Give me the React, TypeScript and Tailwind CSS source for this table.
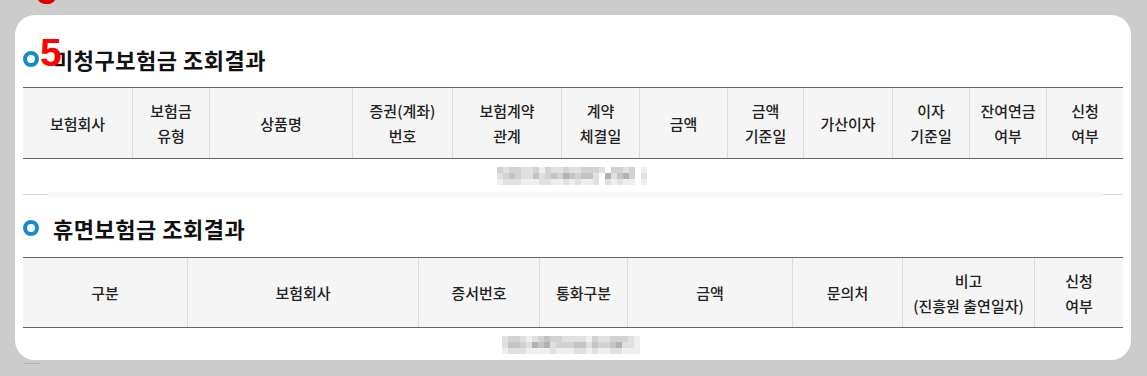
import React from 'react'

type Col = { label: string[]; w: string }

const unclaimedCols: Col[] = [
  { label: ['보험회사'], w: 'w-[109px]' },
  { label: ['보험금', '유형'], w: 'w-[77px]' },
  { label: ['상품명'], w: 'w-[143px]' },
  { label: ['증권(계좌)', '번호'], w: 'w-[100px]' },
  { label: ['보험계약', '관계'], w: 'w-[109px]' },
  { label: ['계약', '체결일'], w: 'w-[78px]' },
  { label: ['금액'], w: 'w-[88px]' },
  { label: ['금액', '기준일'], w: 'w-[76px]' },
  { label: ['가산이자'], w: 'w-[89px]' },
  { label: ['이자', '기준일'], w: 'w-[77px]' },
  { label: ['잔여연금', '여부'], w: 'w-[77px]' },
  { label: ['신청', '여부'], w: 'w-[77px]' },
]

const dormantCols: Col[] = [
  { label: ['구분'], w: 'w-[164px]' },
  { label: ['보험회사'], w: 'w-[231px]' },
  { label: ['증서번호'], w: 'w-[121px]' },
  { label: ['통화구분'], w: 'w-[88px]' },
  { label: ['금액'], w: 'w-[165px]' },
  { label: ['문의처'], w: 'w-[110px]' },
  { label: ['비고', '(진흥원 출연일자)'], w: 'w-[132px]' },
  { label: ['신청', '여부'], w: 'w-[89px]' },
]

// pixelated (masked) result text, one digit per 6px block
const shades = ['transparent', '#efefef', '#e0e0e0', '#d2d2d2', '#c4c4c4', '#b2b2b2']
const blur1 = ['3233223132232233320332301', '2343224234354344205245302', '1222111221121211202121101']
const blur2 = ['23321234332222132233321', '24432545233344243345221', '12221111211122121122111']

function Pixelated({ rows, w, h }: { rows: string[]; w: number; h: number }) {
  return (
    <svg width={w} height={h} className="block">
      {rows.map((row, r) =>
        row.split('').map((c, i) =>
          c === '0' ? null : <rect key={`${r}-${i}`} x={i * 6} y={r * 6} width={6} height={6} fill={shades[+c]} />
        )
      )}
    </svg>
  )
}

function SectionTitle({ children }: { children: React.ReactNode }) {
  return (
    <div className="flex items-center h-[30px] gap-[14px]">
      <span className="w-[16px] h-[16px] rounded-full border-[4px] border-[#168ac5] bg-white" />
      <h2 className="text-[22px] font-bold text-[#111] leading-[30px] tracking-[0.5px]">{children}</h2>
    </div>
  )
}

function HeaderRow({ cols, h }: { cols: Col[]; h: string }) {
  return (
    <div className={`flex ${h} border-y border-[#666] bg-[#f5f5f5]`}>
      {cols.map((c, i) => (
        <div
          key={i}
          className={`${c.w} shrink-0 flex flex-col items-center justify-center text-[15px] font-medium leading-[25px] text-[#222] text-center ${i > 0 ? 'border-l border-[#dcdcdc]' : ''}`}
        >
          {c.label.map((l, j) => (
            <span key={j} className="whitespace-nowrap">{l}</span>
          ))}
        </div>
      ))}
    </div>
  )
}

export default function App() {
  return (
    <div
      className="relative w-full h-[376px] bg-[#cccccc] overflow-hidden pl-[15px] pt-[15px]"
      style={{ fontFamily: '"Noto Sans CJK KR", "Noto Sans", sans-serif' }}
    >
      <div className="w-[1116px] h-[345px] bg-white rounded-[20px] overflow-hidden pt-[29px] px-[8px]">
        {/* 미청구보험금 */}
        <SectionTitle>미청구보험금 조회결과</SectionTitle>
        <div className="mt-[13px] w-[1100px]">
          <HeaderRow cols={unclaimedCols} h="h-[72px]" />
          <div className="h-[33px] flex items-center justify-center">
            <div className="ml-[-2px]">
              <Pixelated rows={blur1} w={150} h={18} />
            </div>
          </div>
          <div className="flex items-center h-[5px]">
            <div className="w-[25px] h-px bg-[#d4d4d4]" />
            <div className="flex-1 h-[5px] bg-[#f8f8f8]" />
            <div className="w-[20px] h-px bg-[#d4d4d4]" />
          </div>
        </div>

        {/* 휴면보험금 */}
        <div className="mt-[16px]">
          <SectionTitle>휴면보험금 조회결과</SectionTitle>
        </div>
        <div className="mt-[14px] w-[1100px]">
          <HeaderRow cols={dormantCols} h="h-[71px]" />
          <div className="h-[40px] flex justify-center pt-[8px]">
            <div className="ml-[-4px]">
              <Pixelated rows={blur2} w={138} h={18} />
            </div>
          </div>
        </div>
      </div>

      {/* stray row line below the card */}
      <div className="absolute left-[23px] top-[363px] w-[18px] h-px bg-[#b5b5b5]" />

      {/* red annotation numbers */}
      <span
        className="absolute left-[36px] top-[-29px] text-[39px] leading-[39px] font-bold text-[#dd0000]"
        style={{ fontFamily: '"Liberation Sans", Arial, sans-serif' }}
      >
        5
      </span>
      <span
        className="absolute left-[40px] top-[33px] text-[39px] leading-[39px] font-bold text-[#ff0000]"
        style={{ fontFamily: '"Liberation Sans", Arial, sans-serif' }}
      >
        5
      </span>
    </div>
  )
}
